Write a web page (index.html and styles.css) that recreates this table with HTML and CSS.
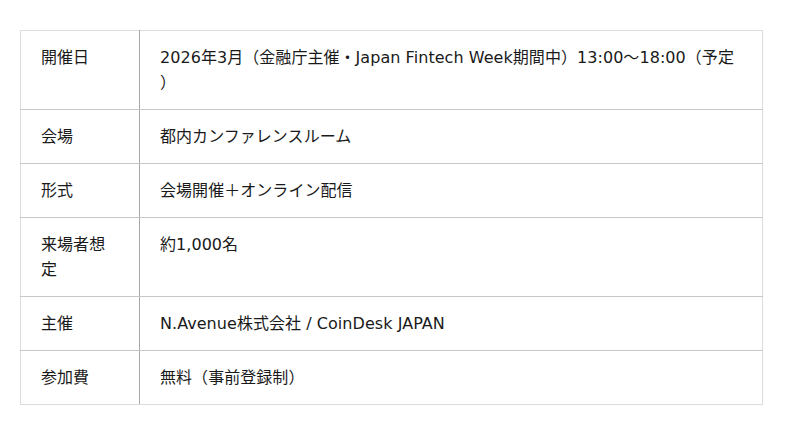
FILE: index.html
```html
<!DOCTYPE html>
<html lang="ja">
<head>
<meta charset="utf-8">
<link rel="stylesheet" href="styles.css">
</head>
<body>
<table class="info">
  <colgroup><col class="c-label"><col></colgroup>
  <tbody>
    <tr><th>開催日</th><td>2026年3月（金融庁主催・Japan Fintech Week期間中）13:00〜18:00（予定）</td></tr>
    <tr><th>会場</th><td>都内カンファレンスルーム</td></tr>
    <tr><th>形式</th><td>会場開催＋オンライン配信</td></tr>
    <tr><th>来場者想定</th><td>約1,000名</td></tr>
    <tr><th>主催</th><td>N.Avenue株式会社 / CoinDesk JAPAN</td></tr>
    <tr><th>参加費</th><td>無料（事前登録制）</td></tr>
  </tbody>
</table>
</body>
</html>
```
FILE: styles.css
```css
html, body {
  margin: 0;
  padding: 0;
  background: #fff;
}
body {
  padding: 30px 20px;
  font-family: "DejaVu Sans", "Noto Sans CJK JP", sans-serif;
  font-size: 16px;
  letter-spacing: 0.05px;
  color: #1a1a1a;
}
.info {
  width: 743px;
  border-collapse: collapse;
  table-layout: fixed;
  border: 1px solid #dcdcdc;
}
.c-label {
  width: 119px;
}
.info th,
.info td {
  text-align: left;
  vertical-align: top;
  font-weight: normal;
  line-height: 25px;
  padding: 14px 20px;
  line-break: anywhere;
  border-top: 1px solid #c8c8c8;
  border-bottom: 1px solid #c8c8c8;
}
.info td {
  padding-right: 24px;
}
.info th {
  border-right: 1px solid #a8a8a8;
}
.info tr:first-child th,
.info tr:first-child td {
  border-top-color: #dcdcdc;
}
.info tr:last-child th,
.info tr:last-child td {
  border-bottom-color: #dcdcdc;
}
```
